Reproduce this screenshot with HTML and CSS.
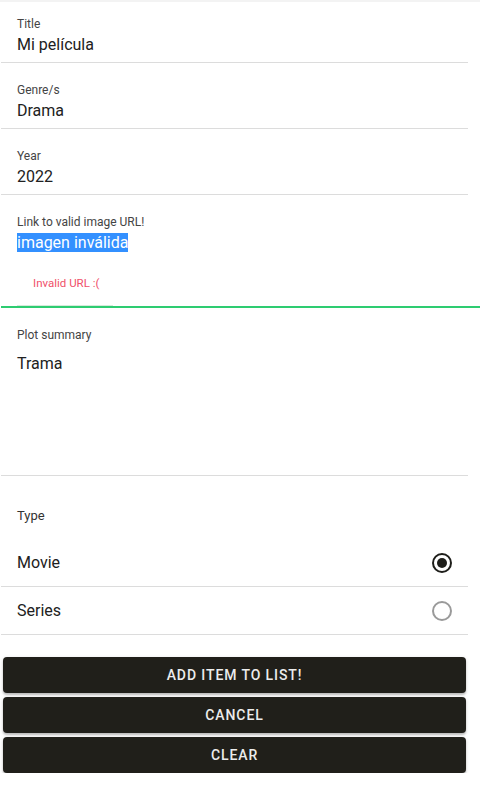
FILE: index.html
```html
<!DOCTYPE html>
<html lang="es">
<head>
<meta charset="utf-8">
<title>Form</title>
<link rel="stylesheet" href="styles.css">
</head>
<body>
<div class="topbar"></div>
<form class="form">
  <div class="field first">
    <div class="label">Title</div>
    <div class="value">Mi película</div>
  </div>
  <div class="field">
    <div class="label">Genre/s</div>
    <div class="value">Drama</div>
  </div>
  <div class="field">
    <div class="label">Year</div>
    <div class="value">2022</div>
  </div>
  <div class="field invalid">
    <div class="label">Link to valid image URL!</div>
    <div class="value"><span class="selected">imagen inválida</span></div>
    <div class="hint">Invalid URL :(</div>
    <div class="hint-line"></div>
    <div class="focus-line"></div>
  </div>
  <div class="field plot">
    <div class="label">Plot summary</div>
    <div class="value textarea">Trama</div>
  </div>
  <div class="type-label">Type</div>
  <div class="radio-row">
    <span class="radio-text">Movie</span>
    <span class="radio checked"></span>
  </div>
  <div class="radio-row">
    <span class="radio-text">Series</span>
    <span class="radio"></span>
  </div>
  <div class="buttons">
    <button type="button" class="btn">Add item to list!</button>
    <button type="button" class="btn">Cancel</button>
    <button type="button" class="btn">Clear</button>
  </div>
</form>
</body>
</html>
```
FILE: styles.css
```css
html, body {
  margin: 0;
  padding: 0;
  background: #ffffff;
  font-family: Roboto, "Noto Sans", "Liberation Sans", sans-serif;
  color: #212121;
}

.topbar {
  height: 2px;
  background: #f3f3f3;
}

.form {
  margin: 0 12px 0 1px;
  display: flex;
  flex-direction: column;
}

.field {
  padding: 19px 16px 5px;
  border-bottom: 1px solid #dcdcdc;
}

.field.first {
  padding-top: 14px;
}

.label {
  font-size: 12px;
  line-height: 16px;
  color: #444444;
}

.value {
  margin-top: 1px;
  font-size: 16px;
  line-height: 24px;
  color: #212121;
}

.selected {
  background: #3390ff;
  color: #ffffff;
}

.field.invalid {
  border-bottom: none;
  padding-bottom: 0;
  display: flex;
  flex-direction: column;
}

.hint {
  margin: 20px 0 0 16px;
  font-size: 11.5px;
  line-height: 16px;
  color: #f0506a;
}

.hint-line {
  margin: 14px 0 0 0;
  width: 96px;
  height: 1px;
  background: #d6eadb;
}

.focus-line {
  margin: 0 -28px 0 -16px;
  height: 2px;
  background: #2ecc71;
}

.field.plot {
  padding-bottom: 99px;
}

.value.textarea {
  margin-top: 9px;
}

.type-label {
  margin: 32px 0 15px 16px;
  font-size: 13px;
  line-height: 16px;
  color: #333333;
}

.radio-row {
  height: 47px;
  border-bottom: 1px solid #dcdcdc;
  display: flex;
  align-items: center;
  justify-content: space-between;
  padding: 0 16px;
}

.radio-text {
  font-size: 16px;
  color: #212121;
}

.radio {
  box-sizing: border-box;
  width: 20px;
  height: 20px;
  border-radius: 50%;
  border: 2px solid #9a9a9a;
  display: flex;
  align-items: center;
  justify-content: center;
}

.radio.checked {
  border-color: #1e1e1a;
}

.radio.checked::after {
  content: "";
  width: 10px;
  height: 10px;
  border-radius: 50%;
  background: #1e1e1a;
}

.buttons {
  margin: 22px 2px 0 2px;
  display: flex;
  flex-direction: column;
  gap: 4px;
}

.btn {
  height: 36px;
  border: none;
  border-radius: 4px;
  background: #201f1a;
  color: #ececec;
  font-family: Roboto, "Noto Sans", "Liberation Sans", sans-serif;
  font-size: 14px;
  font-weight: 500;
  letter-spacing: 0.9px;
  text-transform: uppercase;
  box-shadow: 0 2px 2px rgba(0, 0, 0, 0.2), 0 1px 4px rgba(0, 0, 0, 0.12);
  cursor: pointer;
}
```
